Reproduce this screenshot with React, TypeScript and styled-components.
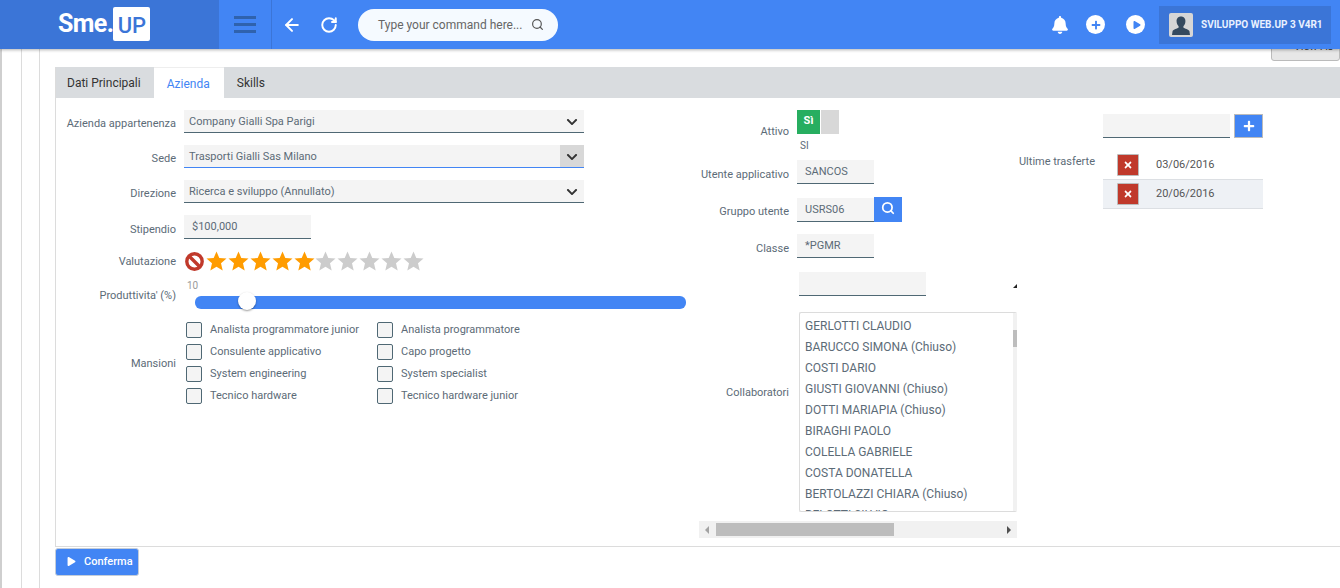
import React from "react";
import styled, { createGlobalStyle } from "styled-components";
import { ArrowLeft, RotateCw, Search } from "lucide-react";
import { FaBell, FaChevronDown, FaPlay, FaPlus, FaTimes } from "react-icons/fa";

const BLUE = "#4285f4";
const DARK_BLUE = "#3b75d7";
const FONT = `Roboto, "Liberation Sans", sans-serif`;

const GlobalStyle = createGlobalStyle`
  html, body {
    margin: 0;
    padding: 0;
    height: 588px;
    overflow: hidden;
    background: #fff;
    font-family: ${FONT};
    font-size: 12px;
  }
  * {
    box-sizing: border-box;
  }
`;

const Header = styled.header`
  position: relative;
  z-index: 2;
  display: flex;
  align-items: stretch;
  height: 49px;
  background: ${BLUE};
  box-shadow: 0 1px 3px rgba(0, 0, 0, 0.3);
`;

const LogoBlock = styled.div`
  display: flex;
  align-items: center;
  width: 219px;
  padding: 0 0 0 58px;
  background: ${DARK_BLUE};
`;

const LogoText = styled.span`
  color: #fff;
  font-size: 25px;
  font-weight: 700;
  letter-spacing: -0.6px;
  line-height: 34px;
  margin-top: -1px;
`;

const LogoBox = styled.span`
  display: block;
  width: 37px;
  height: 34px;
  padding-top: 5px;
  background: #fff;
  border-radius: 2px;
  color: ${DARK_BLUE};
  font-size: 22px;
  font-weight: 500;
  line-height: 28px;
  text-align: center;
  margin-top: -1px;
`;

const MenuBlock = styled.div`
  display: flex;
  flex-direction: column;
  justify-content: center;
  gap: 4px;
  width: 53px;
  padding: 0 15px;
  border-right: 1px solid ${DARK_BLUE};
`;

const MenuLine = styled.i`
  display: block;
  height: 3px;
  background: #2f62ad;
`;

const NavButton = styled.div<{ $left: number }>`
  display: flex;
  align-items: center;
  color: #fff;
  margin-left: ${(p) => p.$left}px;
`;

const SearchPill = styled.div`
  display: flex;
  align-items: center;
  justify-content: space-between;
  align-self: center;
  width: 200px;
  height: 32px;
  margin-left: 20px;
  padding: 0 14px 0 20px;
  border-radius: 16px;
  background: #f5faff;
  color: #666;
  font-size: 12px;
`;

const HeaderRight = styled.div`
  display: flex;
  align-items: center;
  margin-left: auto;
  padding-right: 9px;
`;

const RoundIcon = styled.span<{ $left: number }>`
  display: flex;
  align-items: center;
  justify-content: center;
  width: 19px;
  height: 19px;
  margin-left: ${(p) => p.$left}px;
  border-radius: 50%;
  background: #fff;
  color: ${BLUE};
`;

const BellIcon = styled.span`
  display: flex;
  color: #fff;
`;

const UserBlock = styled.div`
  display: flex;
  align-items: center;
  gap: 8px;
  width: 172px;
  height: 38px;
  margin-left: 14px;
  padding-left: 10px;
  background: ${DARK_BLUE};
  color: #e9f1ff;
  font-size: 10px;
  font-weight: 700;
  white-space: nowrap;
`;

const Frame = styled.div<{ $pad: number; $color?: string; $width?: number }>`
  height: 539px;
  padding-left: ${(p) => p.$pad}px;
  border-left: ${(p) => p.$width ?? 1}px solid ${(p) => p.$color ?? "#dcdcdc"};
`;

const TopStrip = styled.div`
  display: flex;
  justify-content: flex-end;
  height: 18px;
  overflow: hidden;
`;

const ViewButton = styled.div`
  width: 69px;
  height: 24px;
  margin-top: -12px;
  padding: 2px 0 0 16px;
  background: #e7e7e7;
  border: 1px solid #bbb;
  border-radius: 3px;
  color: #444;
  font-size: 11px;
  line-height: 14px;
  text-align: center;
`;

const Panel = styled.section`
  height: 480px;
  border-left: 1px solid #dcdcdc;
  border-bottom: 1px solid #dcdcdc;
`;

const TabBar = styled.nav`
  display: flex;
  height: 31px;
  background: #d9dcdf;
`;

const Tab = styled.div<{ $active?: boolean }>`
  display: flex;
  align-items: center;
  height: 31px;
  padding: ${(p) => (p.$active ? "2px 14px 0 13px" : "0 13px")};
  border-top: ${(p) => (p.$active ? "1px solid #eee" : "0")};
  background: ${(p) => (p.$active ? "#fff" : "transparent")};
  color: ${(p) => (p.$active ? BLUE : "#333")};
  font-size: 12px;
  &:first-child {
    padding-left: 11px;
  }
`;

const FormBody = styled.div`
  display: grid;
  grid-template-columns: 634px 328px 245px;
  height: 447px;
`;

const Column = styled.div<{ $top: number }>`
  display: flex;
  flex-direction: column;
  padding-top: ${(p) => p.$top}px;
`;

const Row = styled.div<{ $mb?: number; $align?: string }>`
  display: flex;
  align-items: ${(p) => p.$align ?? "center"};
  margin-bottom: ${(p) => p.$mb ?? 0}px;
`;

const Label = styled.label<{ $w: number; $dy?: number }>`
  flex: none;
  width: ${(p) => p.$w}px;
  margin-right: 8px;
  padding-top: ${(p) => p.$dy ?? 0}px;
  color: #5c6b77;
  font-size: 11px;
  text-align: right;
  white-space: nowrap;
`;

const SelectBox = styled.div<{ $focus?: boolean }>`
  display: flex;
  align-items: stretch;
  justify-content: space-between;
  width: 400px;
  height: 23px;
  background: #f4f4f4;
  border-bottom: 1px solid ${(p) => (p.$focus ? BLUE : "#4f6874")};
  color: #5c6b77;
  font-size: 11px;
  line-height: 23px;
`;

const SelectValue = styled.span`
  padding-left: 5px;
`;

const SelectArrow = styled.span<{ $focus?: boolean }>`
  display: flex;
  align-items: center;
  justify-content: center;
  width: 24px;
  padding-top: 2px;
  background: ${(p) => (p.$focus ? "#d8d8d8" : "transparent")};
  color: #333;
`;

const TextInput = styled.div<{ $w: number; $ml?: number }>`
  flex: none;
  width: ${(p) => p.$w}px;
  height: 24px;
  margin-left: ${(p) => p.$ml ?? 0}px;
  padding-left: 8px;
  background: #f4f4f4;
  border-bottom: 1px solid #4f6874;
  color: #5c6b77;
  font-size: 11px;
  line-height: 23px;
`;

const Stars = styled.div`
  display: flex;
  align-items: center;
  width: 240px;
`;

const StarCell = styled.span<{ $on: boolean }>`
  display: flex;
  justify-content: center;
  width: 21.9px;
  color: ${(p) => (p.$on ? "#ff9c00" : "#cccccc")};
`;

const BanIcon = styled.span`
  display: flex;
  justify-content: center;
  width: 21px;
  margin-right: 1px;
  color: #c0392b;
`;

const SliderWrap = styled.div`
  display: flex;
  flex-direction: column;
  width: 502px;
`;

const SliderValue = styled.span`
  padding: 1px 0 0 3px;
  color: #9a9a9a;
  font-size: 10px;
  line-height: 12px;
`;

const SliderTrack = styled.div`
  position: relative;
  width: 491px;
  height: 13px;
  margin: 4px 0 0 11px;
  border-radius: 6px;
  background: ${BLUE};
`;

const SliderThumb = styled.span`
  position: absolute;
  left: 43px;
  top: -4px;
  width: 18px;
  height: 18px;
  border-radius: 50%;
  background: #fff;
  box-shadow: 0 1px 2px rgba(0, 0, 0, 0.4);
`;

const ChecksGrid = styled.div`
  display: grid;
  grid-template-columns: 191px 200px;
  grid-auto-rows: 22px;
  padding-left: 2px;
`;

const CheckItem = styled.div`
  display: flex;
  align-items: center;
  gap: 8px;
  color: #5c6b77;
  font-size: 11px;
  white-space: nowrap;
`;

const CheckBox = styled.span`
  flex: none;
  width: 16px;
  height: 16px;
  margin-top: 1px;
  background: #f4f4f4;
  border: 1px solid #4f6874;
  border-radius: 2px;
`;

const ToggleGroup = styled.div`
  display: flex;
  gap: 1px;
  height: 24px;
`;

const ToggleOn = styled.span`
  width: 23px;
  padding-top: 4px;
  background: #27ae60;
  color: #fff;
  font-size: 11px;
  font-weight: 700;
  line-height: 14px;
  text-align: center;
`;

const ToggleOff = styled.span`
  width: 18px;
  background: #d8d8d8;
`;

const ToggleHint = styled.div`
  height: 26px;
  padding: 5px 0 0 3px;
  color: #5c6b77;
  font-size: 10px;
  line-height: 14px;
`;

const SearchButton = styled.span`
  display: flex;
  align-items: center;
  justify-content: center;
  width: 28px;
  height: 25px;
  margin-top: -1px;
  padding-bottom: 3px;
  background: ${BLUE};
  color: #fff;
`;

const ResizableRow = styled.div`
  position: relative;
  height: 24px;
  margin-bottom: 16px;
`;

const ResizeMark = styled.span`
  position: absolute;
  left: 323px;
  top: 12px;
  width: 0;
  height: 0;
  border-left: 4px solid transparent;
  border-bottom: 4px solid #222;
`;

const ListBox = styled.div`
  position: relative;
  flex: none;
  width: 218px;
  height: 200px;
  margin-left: 2px;
  padding: 3px 0 0 5px;
  overflow: hidden;
  border: 1px solid #dcdcdc;
  border-right: 0;
  border-radius: 2px;
`;

const ListItem = styled.div`
  height: 21px;
  color: #5c6b77;
  font-size: 12px;
  line-height: 21px;
  white-space: nowrap;
`;

const ListScroll = styled.div`
  position: absolute;
  top: 0;
  right: 0;
  width: 4px;
  height: 100%;
  background: #f1f1f1;
`;

const ListScrollThumb = styled.div`
  width: 100%;
  height: 17px;
  margin-top: 17px;
  background: #bdbdbd;
`;

const HScroll = styled.div`
  display: flex;
  align-items: center;
  width: 318px;
  height: 17px;
  margin: 9px 0 0 9px;
  background: #f1f1f1;
`;

const ArrowLeftMark = styled.span`
  margin-left: 6px;
  width: 0;
  height: 0;
  border-top: 4px solid transparent;
  border-bottom: 4px solid transparent;
  border-right: 4px solid #a3a3a3;
`;

const HThumb = styled.span`
  width: 178px;
  height: 13px;
  margin-left: 7px;
  background: #bdbdbd;
`;

const ArrowRightMark = styled.span`
  margin-left: auto;
  margin-right: 6px;
  width: 0;
  height: 0;
  border-top: 4px solid transparent;
  border-bottom: 4px solid transparent;
  border-left: 4px solid #505050;
`;

const AddButton = styled.span`
  display: flex;
  align-items: center;
  justify-content: center;
  width: 29px;
  height: 24px;
  margin-left: 4px;
  background: ${BLUE};
  border: 1px solid #bbb;
  color: #fff;
`;

const TripTable = styled.div`
  width: 160px;
  margin-top: 1px;
`;

const TripRow = styled.div<{ $alt?: boolean }>`
  display: flex;
  align-items: center;
  height: 29px;
  padding: 0 0 2px 14px;
  background: ${(p) => (p.$alt ? "#eef1f5" : "#fff")};
  border-bottom: 1px solid #dcdfe3;
  color: #555;
  font-size: 11px;
`;

const DeleteButton = styled.span`
  display: flex;
  align-items: center;
  justify-content: center;
  width: 22px;
  height: 22px;
  margin: 2px 17px 0 0;
  background: #c0392b;
  border: 1px solid #bbb;
  border-radius: 1px;
  color: #fff;
`;

const ConfirmButton = styled.button`
  display: flex;
  align-items: center;
  gap: 8px;
  width: 84px;
  height: 28px;
  margin-top: 1px;
  padding: 0 0 2px 11px;
  background: ${BLUE};
  border: 1px solid #c4cdd9;
  border-radius: 3px;
  color: #fff;
  font-family: ${FONT};
  font-size: 11px;
  font-weight: 500;
`;

const companyFields = [
  { label: "Azienda appartenenza", value: "Company Gialli Spa Parigi" },
  { label: "Sede", value: "Trasporti Gialli Sas Milano", focus: true },
  { label: "Direzione", value: "Ricerca e sviluppo (Annullato)" },
];

const duties = [
  "Analista programmatore junior",
  "Analista programmatore",
  "Consulente applicativo",
  "Capo progetto",
  "System engineering",
  "System specialist",
  "Tecnico hardware",
  "Tecnico hardware junior",
];

const people = [
  "GERLOTTI CLAUDIO",
  "BARUCCO SIMONA (Chiuso)",
  "COSTI DARIO",
  "GIUSTI GIOVANNI (Chiuso)",
  "DOTTI MARIAPIA (Chiuso)",
  "BIRAGHI PAOLO",
  "COLELLA GABRIELE",
  "COSTA DONATELLA",
  "BERTOLAZZI CHIARA (Chiuso)",
  "BELOTTI SILVIO",
];

const Avatar = () => (
  <svg width="24" height="24" viewBox="0 0 24 24">
    <rect width="24" height="24" rx="2" fill="#d6d6d6" />
    <path
      d="M12 3.5c-3 0-4.6 2.2-4.4 5 .1 1.9.9 3.6 2 4.7v1.3c-1.2 1.2-5.3 1.7-6 3.6L3 22h18l-.6-3.9c-.7-1.9-4.8-2.4-6-3.6v-1.3c1.1-1.1 1.9-2.8 2-4.7.2-2.8-1.4-5-4.4-5z"
      fill="#34495e"
    />
  </svg>
);

const Star = () => (
  <svg width="21" height="20" viewBox="0 0 21 20" fill="currentColor">
    <polygon points="10.5,0.5 13.3,7 20.5,7.6 15,12.3 16.7,19.5 10.5,15.7 4.3,19.5 6,12.3 0.5,7.6 7.7,7" />
  </svg>
);

const Ban = () => (
  <svg width="19" height="19" viewBox="0 0 19 19" fill="none" stroke="currentColor" strokeWidth="3.4">
    <circle cx="9.5" cy="9.5" r="7.7" />
    <line x1="4" y1="4" x2="15" y2="15" />
  </svg>
);

export default function App() {
  return (
    <>
      <GlobalStyle />
      <Header>
        <LogoBlock>
          <LogoText>Sme.</LogoText>
          <LogoBox>UP</LogoBox>
        </LogoBlock>
        <MenuBlock>
          <MenuLine />
          <MenuLine />
          <MenuLine />
        </MenuBlock>
        <NavButton $left={10}>
          <ArrowLeft size={20} strokeWidth={2.4} />
        </NavButton>
        <NavButton $left={18}>
          <RotateCw size={18} strokeWidth={2.6} />
        </NavButton>
        <SearchPill>
          <span>Type your command here...</span>
          <Search size={13} color="#555" strokeWidth={2.2} />
        </SearchPill>
        <HeaderRight>
          <BellIcon>
            <FaBell size={18} />
          </BellIcon>
          <RoundIcon $left={17}>
            <FaPlus size={10} />
          </RoundIcon>
          <RoundIcon $left={21}>
            <FaPlay size={8} style={{ marginLeft: 2 }} />
          </RoundIcon>
          <UserBlock>
            <Avatar />
            <span>SVILUPPO WEB.UP 3 V4R1</span>
          </UserBlock>
        </HeaderRight>
      </Header>

      <Frame $pad={19} $width={2} $color="#cfcfcf">
        <Frame $pad={17}>
          <Frame $pad={15}>
            <TopStrip>
              <ViewButton>View As</ViewButton>
            </TopStrip>
            <Panel>
              <TabBar>
                <Tab>Dati Principali</Tab>
                <Tab $active>Azienda</Tab>
                <Tab>Skills</Tab>
              </TabBar>
              <FormBody>
                <Column $top={12}>
                  {companyFields.map((f) => (
                    <Row key={f.label} $mb={12}>
                      <Label $w={120} $dy={4}>
                        {f.label}
                      </Label>
                      <SelectBox $focus={f.focus}>
                        <SelectValue>{f.value}</SelectValue>
                        <SelectArrow $focus={f.focus}>
                          <FaChevronDown size={12} />
                        </SelectArrow>
                      </SelectBox>
                    </Row>
                  ))}
                  <Row $mb={12}>
                    <Label $w={120} $dy={4}>
                      Stipendio
                    </Label>
                    <TextInput $w={127}>$100,000</TextInput>
                  </Row>
                  <Row $mb={8}>
                    <Label $w={120}>Valutazione</Label>
                    <Stars>
                      <BanIcon>
                        <Ban />
                      </BanIcon>
                      {Array.from({ length: 10 }, (_, i) => (
                        <StarCell key={i} $on={i < 5}>
                          <Star />
                        </StarCell>
                      ))}
                    </Stars>
                  </Row>
                  <Row $mb={9}>
                    <Label $w={120} $dy={2}>
                      Produttivita' (%)
                    </Label>
                    <SliderWrap>
                      <SliderValue>10</SliderValue>
                      <SliderTrack>
                        <SliderThumb />
                      </SliderTrack>
                    </SliderWrap>
                  </Row>
                  <Row>
                    <Label $w={120} $dy={2}>
                      Mansioni
                    </Label>
                    <ChecksGrid>
                      {duties.map((d) => (
                        <CheckItem key={d}>
                          <CheckBox />
                          {d}
                        </CheckItem>
                      ))}
                    </ChecksGrid>
                  </Row>
                </Column>

                <Column $top={12}>
                  <Row $align="flex-start">
                    <Label $w={99} $dy={15}>
                      Attivo
                    </Label>
                    <div>
                      <ToggleGroup>
                        <ToggleOn>Sì</ToggleOn>
                        <ToggleOff />
                      </ToggleGroup>
                      <ToggleHint>SI</ToggleHint>
                    </div>
                  </Row>
                  <Row $mb={14}>
                    <Label $w={99} $dy={5}>
                      Utente applicativo
                    </Label>
                    <TextInput $w={77}>SANCOS</TextInput>
                  </Row>
                  <Row $mb={12}>
                    <Label $w={99} $dy={3}>
                      Gruppo utente
                    </Label>
                    <TextInput $w={77}>USRS06</TextInput>
                    <SearchButton>
                      <Search size={14} strokeWidth={3} />
                    </SearchButton>
                  </Row>
                  <Row $mb={14}>
                    <Label $w={99} $dy={5}>
                      Classe
                    </Label>
                    <TextInput $w={77}>*PGMR</TextInput>
                  </Row>
                  <ResizableRow>
                    <TextInput $w={127} $ml={109} />
                    <ResizeMark />
                  </ResizableRow>
                  <Row $align="flex-start">
                    <Label $w={99} $dy={74}>
                      Collaboratori
                    </Label>
                    <ListBox>
                      {people.map((p) => (
                        <ListItem key={p}>{p}</ListItem>
                      ))}
                      <ListScroll>
                        <ListScrollThumb />
                      </ListScroll>
                    </ListBox>
                  </Row>
                  <HScroll>
                    <ArrowLeftMark />
                    <HThumb />
                    <ArrowRightMark />
                  </HScroll>
                </Column>

                <Column $top={16}>
                  <Row $mb={12}>
                    <TextInput $w={127} $ml={85} />
                    <AddButton>
                      <FaPlus size={12} />
                    </AddButton>
                  </Row>
                  <Row $align="flex-start">
                    <Label $w={77} $dy={5}>
                      Ultime trasferte
                    </Label>
                    <TripTable>
                      <TripRow>
                        <DeleteButton>
                          <FaTimes size={10} />
                        </DeleteButton>
                        03/06/2016
                      </TripRow>
                      <TripRow $alt>
                        <DeleteButton>
                          <FaTimes size={10} />
                        </DeleteButton>
                        20/06/2016
                      </TripRow>
                    </TripTable>
                  </Row>
                </Column>
              </FormBody>
            </Panel>
            <ConfirmButton>
              <FaPlay size={9} />
              Conferma
            </ConfirmButton>
          </Frame>
        </Frame>
      </Frame>
    </>
  );
}
